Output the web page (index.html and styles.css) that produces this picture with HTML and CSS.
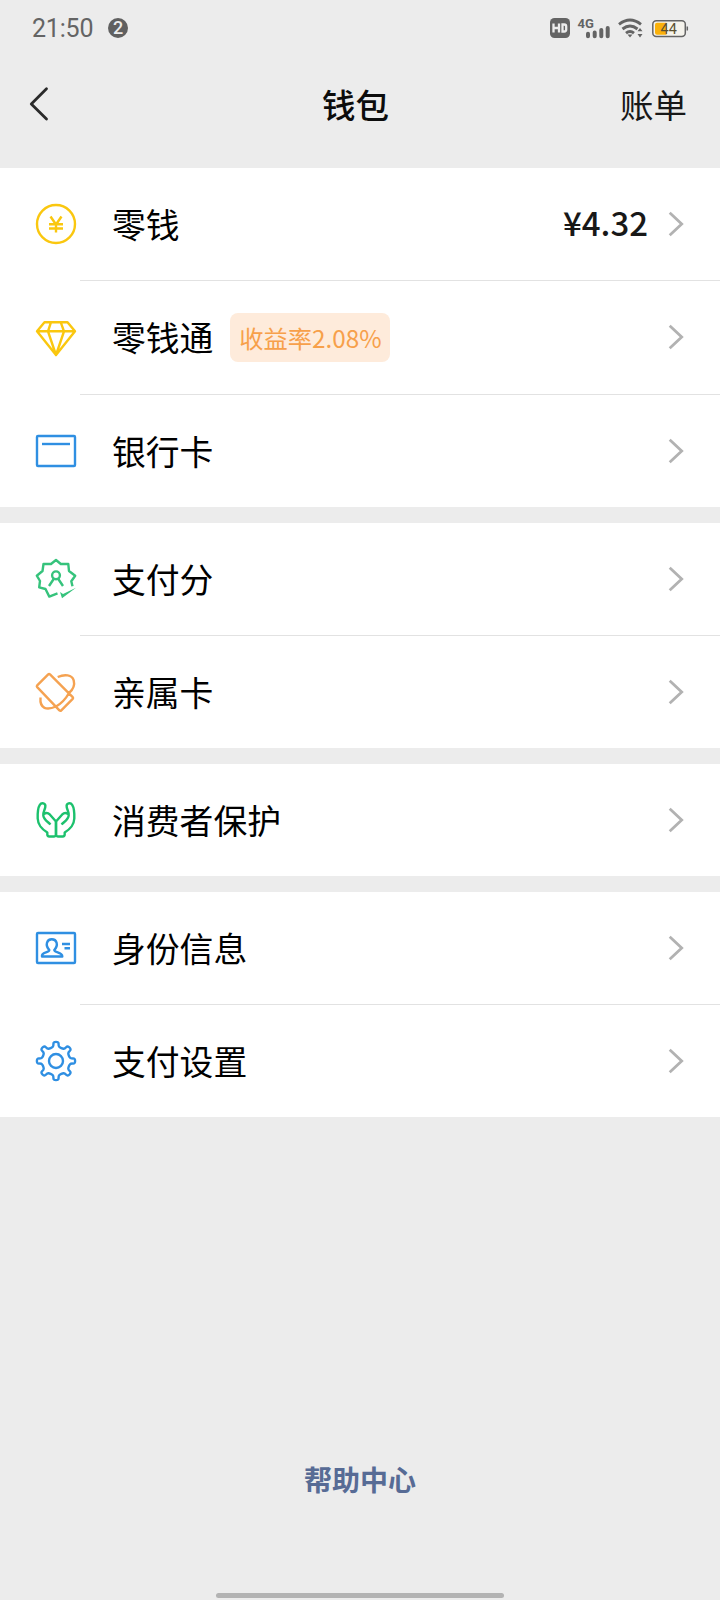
FILE: index.html
```html
<!DOCTYPE html>
<html lang="zh-CN">
<head>
<meta charset="utf-8">
<title>钱包</title>
<link rel="stylesheet" href="styles.css">
</head>
<body>
<div class="screen">
  <div class="status">
    <span class="time">21:50</span><span class="count">2</span>
    <svg class="sys" width="140" height="24" viewBox="0 0 140 24">
      <rect x="0" y="2" width="20" height="20" rx="4.5" fill="#646464"/>
      <path d="M3.500 7.500v9M9 7.500v9M3.500 12h5.500M12.500 8.500h1.700q2 0 2 2v3q0 2-2 2h-1.700z" fill="none" stroke="#ececec" stroke-width="2.300"/>
      <text x="27.500" y="11.800" class="net">4G</text>
      <path d="M38 17.800v2.500M44.700 16.500v3.800M51.300 14v6.300M57.700 12v8.300" stroke="#646464" stroke-width="4" stroke-linecap="round"/>
      <g fill="none" stroke="#646464" stroke-width="2.900"><path d="M69 8.300q11-8.500 22 0"/><path d="M72.500 13q7.500-6 15 0"/><path d="M76 17.200q4-3.200 8 0"/></g>
      <path d="M77.500 18.500h5L80 21.500zM87.500 15.300l2.500-3.300 2.500 3.300zM87.500 18l2.500 3.500 2.500-3.500z" fill="#646464"/>
      <rect x="102.800" y="4.800" width="32.500" height="15.800" rx="3.500" fill="#f5f3ec" stroke="#646464" stroke-width="1.500"/>
      <path d="M107 6.800h9.500v12H107a2 2 0 0 1-2-2v-8a2 2 0 0 1 2-2z" fill="#fab10a"/>
      <path d="M137.300 10.500v4" stroke="#646464" stroke-width="1.500"/>
      <text x="110.500" y="18" class="charge">44</text>
    </svg>
  </div>
  <header class="bar">
    <svg width="24" height="40" viewBox="0 0 24 40"><path d="M18.500 4.700 3.300 20l15.200 15" fill="none" stroke="#2a2a2a" stroke-width="2.800" stroke-linecap="round" stroke-linejoin="round"/></svg>
    <h1>钱包</h1>
    <span class="bill">账单</span>
  </header>
  <main>
    <section>
      <div class="row">
        <svg class="icon yellow" viewBox="0 0 48 48"><circle cx="24" cy="24" r="19"/><path d="m18.500 16.500 5.500 8 5.500-8M24 24.500v8M17 24.200h14M17 28.500h14"/></svg>
        <div class="cell"><span class="label">零钱</span><span class="money">¥4.32</span><svg class="go" viewBox="0 0 16 28"><path d="m1.700 2.700 12 11.300-12 11.300"/></svg></div>
      </div>
      <div class="row second">
        <svg class="icon yellow" viewBox="0 0 48 48"><path d="M12.500 9.200h23L43 18.300 24 42 5 18.300zM5 18.300h38M19 9.200l-3 9.100L24 42l8-23.700-3.300-9.100"/></svg>
        <div class="cell"><span class="label">零钱通</span><span class="tag">收益率2.08%</span><svg class="go" viewBox="0 0 16 28"><path d="m1.700 2.700 12 11.300-12 11.300"/></svg></div>
      </div>
      <div class="row">
        <svg class="icon blue" viewBox="0 0 48 48"><rect x="5" y="9" width="38" height="30" rx="1"/><path d="M10 17h28"/></svg>
        <div class="cell"><span class="label">银行卡</span><svg class="go" viewBox="0 0 16 28"><path d="m1.700 2.700 12 11.300-12 11.300"/></svg></div>
      </div>
    </section>
    <section>
      <div class="row">
        <svg class="icon mint" viewBox="0 0 48 48"><path d="M40.500 31.300 39.300 26.300 43.200 20.700 37 16 36.300 9 28.800 9 24 5 19 9 11.500 9 10.500 16 4.800 20.700 8 26 7.200 32.300 13.500 34 17.300 41.600 25.500 38.300"/><circle cx="24" cy="20.300" r="3.900"/><path d="m21.700 24-4.700 7M26.300 24l4.700 7"/><path class="solid" d="M28 37 31 39 44 32.800 30 43.200z"/></svg>
        <div class="cell"><span class="label">支付分</span><svg class="go" viewBox="0 0 16 28"><path d="m1.700 2.700 12 11.300-12 11.300"/></svg></div>
      </div>
      <div class="row">
        <svg class="icon orange" viewBox="0 0 48 48"><path d="m16.200 6.300-11 11q-.8.900 0 1.800l22.200 23.300q1 .9 1.900 0l11.400-11.500q.8-.9 0-1.800L18 6.300q-.9-.8-1.800 0zM24 38.500Q32 34 37 25M25.700 9c7-3 14.300-2.300 16 3.300 1.400 5-1.300 9.700-4.700 12.700M8.500 29.500C7.500 41 15 42.500 24 38.500"/></svg>
        <div class="cell"><span class="label">亲属卡</span><svg class="go" viewBox="0 0 16 28"><path d="m1.700 2.700 12 11.300-12 11.300"/></svg></div>
      </div>
    </section>
    <section>
      <div class="row">
        <svg class="icon green" viewBox="0 0 48 48"><path d="M24 25.500v13q-.2 2-2.200 2h-4.500q-2 0-2-2.200V36.500C9 32.500 6 29 5.700 22.500 5.500 16.500 6 11.500 7.800 8.800 9.500 6.300 14 7 13.300 11c-.5 3-2.300 5-2 8.300.3 4.200 4 6 7.200 9.200M12 18c2.500-2 4.500-.8 6 .7L24 25.500"/><path d="M24 25.500v13q.2 2 2.200 2h4.500q2 0 2-2.200V36.500C39 32.500 42 29 42.300 22.500 42.500 16.500 42 11.500 40.200 8.800 38.500 6.300 34 7 34.700 11c.5 3 2.300 5 2 8.300-.3 4.200-4 6-7.200 9.200M36 18c-2.500-2-4.500-.8-6 .7L24 25.500"/></svg>
        <div class="cell"><span class="label">消费者保护</span><svg class="go" viewBox="0 0 16 28"><path d="m1.700 2.700 12 11.300-12 11.300"/></svg></div>
      </div>
    </section>
    <section>
      <div class="row">
        <svg class="icon blue" viewBox="0 0 48 48"><rect x="5" y="9" width="38" height="30" rx="1"/><path d="M17.300 26c-4.500-5-2.500-10.700 2.500-10.700s7 5.700 2.500 10.700c0 3 8 2 8 6.500H10c-1-4.500 7.300-3.500 7.300-6.500zM30 20h8M32.500 24.300H38"/></svg>
        <div class="cell"><span class="label">身份信息</span><svg class="go" viewBox="0 0 16 28"><path d="m1.700 2.700 12 11.300-12 11.300"/></svg></div>
      </div>
      <div class="row">
        <svg class="icon blue" viewBox="0 0 48 48"><circle cx="24" cy="24" r="7"/><path id="gear" d=""/></svg>
        <div class="cell"><span class="label">支付设置</span><svg class="go" viewBox="0 0 16 28"><path d="m1.700 2.700 12 11.300-12 11.300"/></svg></div>
      </div>
    </section>
  </main>
  <footer><span class="help">帮助中心</span><div class="home"></div></footer>
</div>
<script src="gear.js"></script>
</body>
</html>
```
FILE: gear.js
```js
// Eight-tooth gear outline, smoothed with quadratic midpoints.
const pts = [];
for (let i = 0; i < 8; i++) {
  for (const [deg, r] of [[-17, 14], [-9.5, 15], [-8, 19.3], [8, 19.3], [9.5, 15], [17, 14]]) {
    const a = (i * 45 + deg) * Math.PI / 180;
    pts.push([24 + r * Math.sin(a), 24 - r * Math.cos(a)]);
  }
}
const mid = (a, b) => [(a[0] + b[0]) / 2, (a[1] + b[1]) / 2];
let d = 'M' + mid(pts[pts.length - 1], pts[0]);
pts.forEach((p, i) => { d += 'Q' + p + ' ' + mid(p, pts[(i + 1) % pts.length]); });
document.getElementById('gear').setAttribute('d', d + 'Z');
```
FILE: styles.css
```css
* { box-sizing: border-box; }
body { margin: 0; background: #ececec; font-family: Roboto, "Noto Sans CJK SC", sans-serif; }
.screen { width: 720px; height: 1600px; display: flex; flex-direction: column; overflow: hidden; }
.status { height: 56px; padding: 0 30px 0 32px; display: flex; align-items: center; color: #646464; }
.time { font-size: 25px; line-height: 30px; padding-top: 2px; width: 62px; letter-spacing: -0.2px; white-space: nowrap; }
.count { width: 20px; height: 20px; margin-left: 14px; border-radius: 50%; background: #606060; color: #ececec; font-size: 18px; font-weight: 500; line-height: 20px; text-align: center; }
.sys { margin-left: auto; }
.net { font: 700 13px Roboto, sans-serif; fill: #646464; }
.charge { font: 400 14.500px Roboto, sans-serif; fill: #5b5030; }
.bar { height: 112px; padding: 0 34px 10px 28px; display: grid; grid-template-columns: 63px 1fr 66px; align-items: center; }
.bar svg { margin-top: -6px; }
h1 { margin: 0; font-size: 33.5px; font-weight: 500; line-height: 48px; text-align: center; color: #0c0c0c; }
.bill { font-size: 33.5px; line-height: 48px; color: #181818; white-space: nowrap; }
section { background: #fff; margin-bottom: 16px; }
section:last-child { margin-bottom: 0; }
.row { display: flex; height: 113px; }
.row.second { height: 114px; }
.row:last-child { height: 112px; }
.icon { width: 48px; height: 48px; margin: 32px 0 0 32px; flex: none; fill: none; stroke: currentColor; stroke-width: 2.4; stroke-linejoin: round; }
.yellow { color: #fac70f; }
.blue { color: #2f8fe2; }
.mint { color: #36c37c; }
.orange { color: #f5a251; }
.green { color: #1cc16d; }
.solid { fill: currentColor; stroke: none; }
.cell { flex: 1; display: flex; align-items: center; padding: 0 36px 0 32px; border-bottom: 1px solid #e2e2e2; }
.row:last-child .cell { border-bottom: 0; }
.label { font-size: 33.800px; line-height: 48px; padding-top: 5px; color: #000; }
.go { width: 16px; height: 28px; margin-left: auto; fill: none; stroke: #b2b2b2; stroke-width: 2.8; stroke-linecap: butt; }
.second .go, .second .tag { margin-top: -1px; }
.money { margin-left: auto; padding-bottom: 4px; font-family: "Noto Sans CJK SC", sans-serif; font-size: 33px; line-height: 48px; font-weight: 500; color: #181818; }
.money + .go { margin-left: 20px; }
.tag { margin-left: 17px; width: 160px; height: 49px; border-radius: 8px; background: #feebdb; color: #f7a04a; font-family: "Noto Sans CJK SC", sans-serif; font-size: 24.300px; line-height: 49px; text-align: center; white-space: nowrap; }
footer { flex: 1; display: flex; flex-direction: column; align-items: center; justify-content: flex-end; }
.help { color: #576b95; font-size: 28px; line-height: 40px; font-weight: 700; }
.home { width: 288px; height: 5px; border-radius: 3px; background: #b3b3b3; margin: 91px 0 2px; }
```
